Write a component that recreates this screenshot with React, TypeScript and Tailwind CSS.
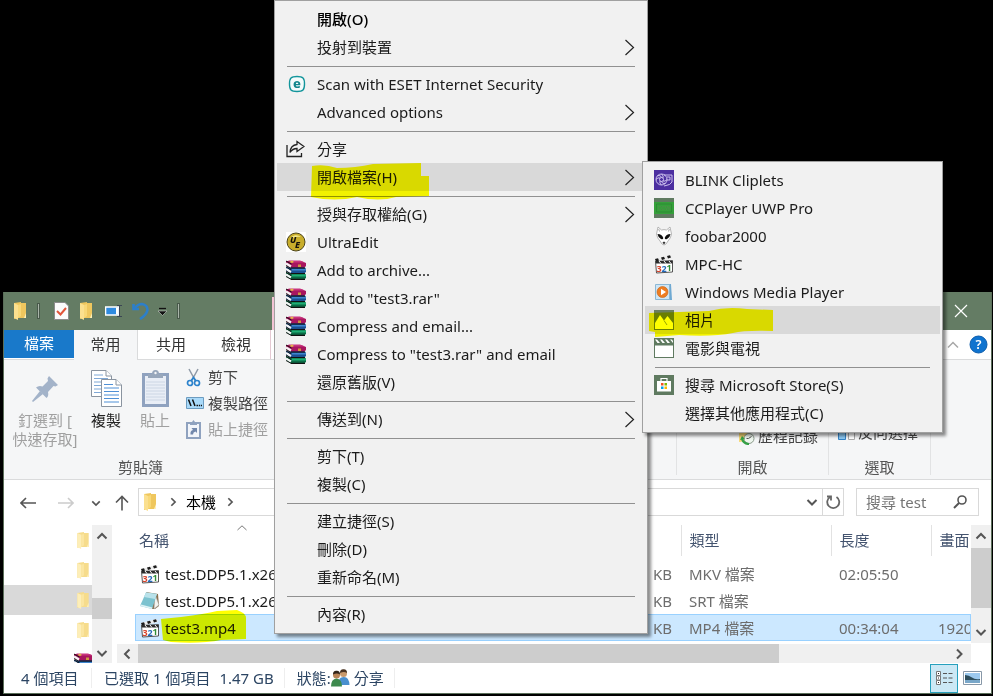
import type { ReactNode } from 'react'
import { clsx } from 'clsx'

type Item = { label: string; icon?: ReactNode; bold?: boolean; sub?: boolean; active?: boolean }

const MENU: Item[][] = [
  [{ label: '開啟(O)', bold: true }, { label: '投射到裝置', sub: true }],
  [{ label: 'Scan with ESET Internet Security', icon: <EsetIcon /> }, { label: 'Advanced options', sub: true }],
  [{ label: '分享', icon: <ShareIcon /> }, { label: '開啟檔案(H)', sub: true, active: true }],
  [
    { label: '授與存取權給(G)', sub: true },
    { label: 'UltraEdit', icon: <UltraEditIcon /> },
    { label: 'Add to archive...', icon: <RarIcon /> },
    { label: 'Add to "test3.rar"', icon: <RarIcon /> },
    { label: 'Compress and email...', icon: <RarIcon /> },
    { label: 'Compress to "test3.rar" and email', icon: <RarIcon /> },
    { label: '還原舊版(V)' },
  ],
  [{ label: '傳送到(N)', sub: true }],
  [{ label: '剪下(T)' }, { label: '複製(C)' }],
  [{ label: '建立捷徑(S)' }, { label: '刪除(D)' }, { label: '重新命名(M)' }],
  [{ label: '內容(R)' }],
]

const OPEN_WITH: Item[][] = [
  [
    { label: 'BLINK Cliplets', icon: <BlinkIcon /> },
    { label: 'CCPlayer UWP Pro', icon: <CCPlayerIcon /> },
    { label: 'foobar2000', icon: <FoobarIcon /> },
    { label: 'MPC-HC', icon: <ClapperIcon /> },
    { label: 'Windows Media Player', icon: <WmpIcon /> },
    { label: '相片', icon: <PhotosIcon />, active: true },
    { label: '電影與電視', icon: <MoviesIcon /> },
  ],
  [{ label: '搜尋 Microsoft Store(S)', icon: <StoreIcon /> }, { label: '選擇其他應用程式(C)' }],
]

const FILES = [
  { name: 'test.DDP5.1.x264', type: 'MKV 檔案', length: '02:05:50', frame: '', icon: <ClapperIcon /> },
  { name: 'test.DDP5.1.x264', type: 'SRT 檔案', length: '', frame: '', icon: <SrtIcon /> },
  { name: 'test3.mp4', type: 'MP4 檔案', length: '00:34:04', frame: '1920', icon: <ClapperIcon />, selected: true },
]

export default function App() {
  return (
    <main className="relative min-h-screen overflow-hidden bg-black pt-[292px] pr-[1px] pb-[3px] pl-[3px] font-['Noto_Sans','Noto_Sans_CJK_TC',sans-serif] text-[15px] leading-5 text-[#1b1b1b]">
      <Explorer />

      {/* Context menu */}
      <div className="absolute top-0 left-[274px] w-[374px]">
        <Menu groups={MENU} />
        <svg className="pointer-events-none absolute top-[161px] left-[37px] h-10 w-[120px] mix-blend-multiply" viewBox="0 0 120 40">
          <path d="M1 5Q14 3 26 7Q44 7 62 3L110 2V15H118V35L85 36Q68 41 46 36Q24 41 0 36Z" fill="#ff0" />
        </svg>
      </div>

      {/* Open-with submenu */}
      <div className="absolute top-[161px] left-[642px] w-[301px]">
        <Menu groups={OPEN_WITH} />
        <svg className="pointer-events-none absolute top-[145px] left-[7px] h-8 w-[126px] mix-blend-multiply" viewBox="0 0 126 32">
          <path d="M0 7L60 5Q78 0 98 3L124 4V25Q96 24 84 27Q64 31 30 29L6 31V26L0 25Z" fill="#ff0" />
        </svg>
      </div>
    </main>
  )
}

function Menu({ groups }: { groups: Item[][] }) {
  return (
    <div role="menu" className="border border-[#a0a0a0] bg-[#f1f1f1] px-0.5 pt-1 pb-[5px] shadow-[3px_3px_3px_rgba(0,0,0,0.45)]">
      {groups.map((group, i) => (
        <div key={i}>
          {i > 0 && (
            <div className="flex h-[9px] items-end pr-2.5 pb-[3px] pl-2.5">
              <div className="h-px flex-1 bg-[#919191]" />
            </div>
          )}
          {group.map((item) => (
            <button
              key={item.label}
              role="menuitem"
              className={clsx('flex h-7 w-full items-center pr-2.5 pl-[9px] text-left', item.active && 'bg-[#d9d9d9]')}
            >
              <span className="flex h-5 w-[31px] shrink-0 items-center">{item.icon}</span>
              <span className={clsx('flex-1 whitespace-nowrap', item.bold && 'font-medium text-black')}>{item.label}</span>
              {item.sub && (
                <svg width="11" height="17" viewBox="0 0 11 17" fill="none" stroke="#222" strokeWidth="1.2">
                  <path d="M1.500 1L9.500 8.500L1.500 16" />
                </svg>
              )}
            </button>
          ))}
        </div>
      ))}
    </div>
  )
}

function Explorer() {
  return (
    <section className="border-x border-b border-[#5b6f5a] bg-white">
      <TitleBar />
      <Tabs />
      <Ribbon />
      <AddressBar />
      <div className="flex">
        <NavPane />
        <FileList />
      </div>
      <StatusBar />
    </section>
  )
}

function TitleBar() {
  return (
    <header className="flex h-[38px] items-center justify-between bg-[#647c64]">
      <div className="flex h-full items-center">
        <span className="ml-2.5"><FolderIcon tall /></span>
        <span className="ml-2.5 h-4 w-[3px] border border-[#48594a] bg-[#a9b5a9]" />
        <button aria-label="內容" className="ml-[14px]">
          <svg width="15" height="18" viewBox="0 0 15 18">
            <path d="M.5.500H11L14.500 4V17.500H.5Z" fill="#fbfbfb" stroke="#8c8c8c" />
            <path d="M3 9L6.500 12.500L12 6" fill="none" stroke="#e2553a" strokeWidth="2" />
          </svg>
        </button>
        <button aria-label="新增資料夾" className="ml-[11px]"><FolderIcon tall /></button>
        <button aria-label="重新命名" className="ml-3">
          <svg width="18" height="12" viewBox="0 0 18 12">
            <path d="M.5 2H14V10H.5Z" fill="#2f8be0" stroke="#fff" strokeWidth="1.600" />
            <path d="M11 2.500H13.500V9.500H11Z" fill="#fff" />
            <path d="M12 .5H17M12 11.500H17M14.500 .5V11.500" stroke="#3b4654" />
          </svg>
        </button>
        <button aria-label="復原" className="ml-[9px]">
          <svg width="17" height="18" viewBox="0 0 17 18" fill="none" stroke="#2d7fca" strokeWidth="2.600">
            <path d="M1.500 2V7H7" />
            <path d="M2.500 6.500Q6 2 10 2Q15.500 3 15.500 8Q14.500 13 8 17" />
          </svg>
        </button>
        <button aria-label="自訂" className="ml-[9px]">
          <svg width="9" height="9" viewBox="0 0 9 9">
            <path d="M1 1.500H8" stroke="#111" strokeWidth="1.300" />
            <path d="M0 4H9L4.500 8.500Z" fill="#111" stroke="#dfe6df" strokeWidth=".5" />
          </svg>
        </button>
        <span className="ml-2.5 h-4 w-[3px] border border-[#48594a] bg-[#a9b5a9]" />
        <span className="mt-[5px] ml-[92px] h-[33px] w-[90px] bg-[#f2c4d4]" />
      </div>
      <button aria-label="關閉" className="mr-[23px]">
        <svg width="14" height="14" viewBox="0 0 14 14" stroke="#fff" strokeWidth="1.200">
          <path d="M1 1L13 13M13 1L1 13" />
        </svg>
      </button>
    </header>
  )
}

function Tabs() {
  return (
    <nav className="flex h-[30px] items-stretch border-b border-[#dadbdc] text-[#333]">
      <button className="mb-px w-[70px] bg-[#1979ca] pb-0.5 text-white">檔案</button>
      <button className="-mb-px w-16 border-r border-[#dadbdc] bg-[#f5f6f7] pb-0.5">常用</button>
      <button className="w-[66px] pb-0.5">共用</button>
      <button className="w-[64px] pb-0.5">檢視</button>
      <span className="w-[3px] border-r border-[#e4c9d2]" />
      <span className="flex-1" />
      <button aria-label="摺疊功能區" className="mr-[10px]">
        <svg width="12" height="8" viewBox="0 0 12 8" fill="none" stroke="#a8a8a8" strokeWidth="1.500">
          <path d="M1 6.500L6 1.500L11 6.500" />
        </svg>
      </button>
      <button aria-label="說明" className="mr-[3px]">
        <svg width="19" height="19" viewBox="0 0 19 19">
          <circle cx="9.500" cy="9.500" r="8.500" fill="#0f73cf" stroke="#0b5cab" />
          <text x="9.500" y="14" textAnchor="middle" fontSize="13" fontWeight="600" fill="#fff">?</text>
        </svg>
      </button>
    </nav>
  )
}

function Ribbon() {
  return (
    <div className="flex h-[120px] border-b border-[#dadbdc] bg-[#f5f6f7] text-[#444]">
      <div className="flex w-[273px] shrink-0 flex-col justify-between">
        <div className="flex pt-[7px]">
          <button className="flex w-[82px] flex-col items-center text-[#a0a0a0]">
            <span className="flex h-[44px] items-center"><PinIcon /></span>
            <span className="leading-[19px]">釘選到 [<br />快速存取]</span>
          </button>
          <button className="flex w-[40px] flex-col items-center text-[#222]">
            <span className="flex h-[44px] items-start pt-[3px]"><CopyIcon /></span>
            <span className="leading-[19px] whitespace-nowrap">複製</span>
          </button>
          <button className="flex w-[58px] flex-col items-center text-[#a0a0a0]">
            <span className="flex h-[44px] items-start pt-[3px]"><PasteIcon /></span>
            <span className="leading-[19px]">貼上</span>
          </button>
          <div className="ml-0.5 flex flex-col gap-1.5">
            <SmallButton icon={<CutIcon />} label="剪下" />
            <SmallButton icon={<PathIcon />} label="複製路徑" />
            <SmallButton icon={<PasteLinkIcon />} label="貼上捷徑" muted />
          </div>
        </div>
        <p className="pb-0.5 text-center text-[#555]">剪貼簿</p>
      </div>
      <div className="my-1 flex-1 border-r border-[#e2e3e4]" />
      <div className="my-1 flex w-[152px] flex-col items-center justify-end border-r border-[#e2e3e4]">
        <div className="mb-[11px] ml-[61px] self-start"><SmallButton icon={<HistoryIcon />} label="歷程記錄" narrow /></div>
        <p className="-mb-0.5 text-[#555]">開啟</p>
      </div>
      <div className="my-1 flex w-[102px] flex-col items-start justify-end border-r border-[#e2e3e4]">
        <div className="mb-[15px] ml-[9px]"><SmallButton icon={<InvertIcon />} label="反向選擇" narrow /></div>
        <p className="-mb-0.5 self-center text-[#555]">選取</p>
      </div>
      <div className="w-[60px]" />
    </div>
  )
}

function SmallButton({ icon, label, muted, narrow }: { icon: ReactNode; label: string; muted?: boolean; narrow?: boolean }) {
  return (
    <button className={clsx('flex items-center whitespace-nowrap', muted && 'text-[#a0a0a0]')}>
      <span className={clsx('flex items-center', narrow ? 'w-5' : 'w-[22px]')}>{icon}</span>
      {label}
    </button>
  )
}

function AddressBar() {
  return (
    <div className="flex h-[45px] items-center pr-3 pb-[2px] pl-4">
      <div className="flex w-[118px] shrink-0 items-center pt-0.5">
        <button aria-label="上一頁"><Arrow color="#555" /></button>
        <button aria-label="下一頁" className="ml-[22px]"><Arrow color="#ccc" right /></button>
        <button aria-label="最近" className="ml-[17px]"><Chevron dir="down" small /></button>
        <button aria-label="上一層" className="ml-[13px]">
          <svg width="16" height="16" viewBox="0 0 16 16" fill="none" stroke="#555" strokeWidth="1.600">
            <path d="M8 15.500V1.500M2 7.500L8 1.500L14 7.500" />
          </svg>
        </button>
      </div>
      <div className="flex h-7 flex-1 items-center border border-[#d9d9d9] pl-[5px]">
        <FolderIcon tall />
        <span className="ml-[11px]"><Chevron dir="right" small /></span>
        <button className="ml-2 text-black">本機</button>
        <span className="ml-[9px]"><Chevron dir="right" small /></span>
        <span className="flex-1" />
        <button aria-label="舊的位置" className="mr-[4px]"><Chevron dir="down" /></button>
        <button aria-label="重新整理" className="flex h-full w-[21px] items-center justify-center border-l border-[#d9d9d9]">
          <svg width="15" height="16" viewBox="0 0 15 16" fill="none" stroke="#666" strokeWidth="1.800">
            <path d="M4 3A6 6 0 1 0 10.500 3" />
            <path d="M1 2.500H5V6.500" />
          </svg>
        </button>
      </div>
      <label className="ml-3 flex h-7 w-[123px] shrink-0 items-center border border-[#d9d9d9] pr-[11px] pl-[9px]">
        <input aria-label="搜尋 test" placeholder="搜尋 test" className="w-0 flex-1 outline-none placeholder:text-[#757575]" />
        <svg width="14" height="14" viewBox="0 0 14 14" fill="none" stroke="#555">
          <circle cx="9" cy="5" r="4" strokeWidth="1.600" />
          <path d="M6 8L1 13" strokeWidth="2" />
        </svg>
      </label>
    </div>
  )
}

function NavPane() {
  return (
    <div className="flex h-[138px] w-[108px] shrink-0">
      <div className="h-full w-[88px] overflow-hidden">
        {[false, false, true, false].map((selected, i) => (
          <div key={i} className={clsx('flex h-[30px] items-center justify-end pr-[2px]', selected && 'bg-[#d9d9d9]')}>
            <FolderIcon pale />
          </div>
        ))}
        <div className="flex pt-2 pl-[70px]"><RarIcon /></div>
      </div>
      <div className="flex w-5 flex-col items-center bg-[#f0f0f0] pt-[5px] pb-1">
        <Chevron dir="up" />
        <span className="mt-14 h-[21px] w-full bg-[#cdcdcd]" />
        <span className="mt-auto"><Chevron dir="down" /></span>
      </div>
    </div>
  )
}

function FileList() {
  return (
    <div className="flex min-w-0 flex-1 flex-col pl-[5px]">
      <div className="flex flex-1">
        <div className="relative min-w-0 flex-1 overflow-hidden pl-[18px]">
          <table className="w-full table-fixed border-collapse text-left">
            <colgroup>
              <col className="w-[216px]" />
              <col />
              <col className="w-[110px]" />
              <col className="w-[150px]" />
              <col className="w-[100px]" />
              <col className="w-[40px]" />
            </colgroup>
            <thead className="text-[#44546f]">
              <tr className="h-[31px]">
                <th className="relative pb-0.5 pl-1 font-normal">
                  名稱
                  <svg className="absolute top-0 left-[102px]" width="10" height="6" viewBox="0 0 10 6" fill="none" stroke="#777">
                    <path d="M.5 5L5 .8L9.500 5" />
                  </svg>
                </th>
                <th />
                <th className="border-r border-[#e2e2e2]" />
                <th className="border-r border-[#e2e2e2] pb-0.5 pl-2 font-normal">類型</th>
                <th className="border-r border-[#e2e2e2] pb-0.5 pl-2 font-normal">長度</th>
                <th className="pb-0.5 pl-2 font-normal whitespace-nowrap">畫面</th>
              </tr>
              <tr className="h-1"><td colSpan={6} /></tr>
            </thead>
            <tbody className="whitespace-nowrap text-[#6d6d6d]">
              {FILES.map((f) => (
                <tr key={f.type} className={clsx('h-[27px]', f.selected && 'bg-[#cce8ff] outline outline-[#99d1ff] -outline-offset-1')}>
                  <td className="text-[#1b1b1b]">
                    <span className="flex items-center pl-[5px]">
                      <span className="w-[25px]">{f.icon}</span>
                      {f.name}
                    </span>
                  </td>
                  <td />
                  <td className="pr-[9px] text-right">KB</td>
                  <td className="pl-2">{f.type}</td>
                  <td className="pl-2">{f.length}</td>
                  <td className="pl-[7px]">{f.frame}</td>
                </tr>
              ))}
            </tbody>
          </table>
          <svg className="pointer-events-none absolute top-[85px] left-11 h-[34px] w-[86px] mix-blend-multiply" viewBox="0 0 86 34">
            <path d="M0 9L20 7Q44 4 56 1L76 0Q85 3 85 8V29L60 30Q40 34 10 32L2 30Z" fill="#ff0" />
          </svg>
        </div>
        <div className="flex w-5 flex-col items-center bg-[#f0f0f0] pt-[5px] pb-[5px]">
          <Chevron dir="up" />
          <span className="mt-1.5 h-[60px] w-full bg-[#cdcdcd]" />
          <span className="mt-auto"><Chevron dir="down" /></span>
        </div>
      </div>
      <div className="mt-px mr-5 flex h-[19px] items-center bg-[#f0f0f0] pr-1.5 pl-1">
        <Chevron dir="left" />
        <span className="ml-[5px] h-full w-[76%] bg-[#cdcdcd]" />
        <span className="ml-auto"><Chevron dir="right" /></span>
      </div>
    </div>
  )
}

function StatusBar() {
  return (
    <footer className="flex h-[30px] items-center text-[#2c4563]">
      <span className="w-[88px] border-r border-[#eee] pl-[17px] whitespace-nowrap">4 個項目</span>
      <span className="pl-3 whitespace-nowrap">已選取 1 個項目</span>
      <span className="pl-[9px] whitespace-nowrap">1.47 GB</span>
      <span className="ml-2.5 h-5 border-l border-[#eee] pl-3 whitespace-nowrap">狀態:</span>
      <UsersIcon />
      <span className="ml-1 h-5 border-r border-[#eee] pr-2.5">分享</span>
      <span className="flex-1" />
      <button aria-label="詳細資料" className="flex h-[29px] w-7 items-center justify-center border border-[#26a0bd] bg-[#cbe8f5]">
        <svg width="18" height="16" viewBox="0 0 18 16">
          <path d="M1.500 1.500H5.500V5.500H1.500ZM1.500 6H5.500V10H1.500ZM1.500 10.500H5.500V14.500H1.500Z" fill="#fff" stroke="#777" />
          <path d="M3 3.500H4M3 8H4M3 12.500H4" stroke="#222" />
          <path d="M8 3.500H18M8 8H18M8 12.500H18" stroke="#555" strokeDasharray="4 1.500" />
        </svg>
      </button>
      <button aria-label="大圖示" className="mr-[9px] ml-[5px]">
        <svg width="19" height="14" viewBox="0 0 19 14">
          <path d="M.5.500H18.500V13.500H.5Z" fill="#fff" stroke="#8898a8" />
          <path d="M2 2H17V12H2Z" fill="#9cc9ee" />
          <path d="M2 4Q6 4 9 6.500T17 8V9H2Z" fill="#2d4d5c" />
          <path d="M2 9H17V12H2Z" fill="#79a7c9" />
        </svg>
      </button>
    </footer>
  )
}

/* ---- glyphs ---- */

function Chevron({ dir, small }: { dir: 'up' | 'down' | 'left' | 'right'; small?: boolean }) {
  const d = {
    up: 'M1.500 8.500L6 4L10.500 8.500',
    down: 'M1.500 4L6 8.500L10.500 4',
    left: 'M8.500 1.500L4 6L8.500 10.500',
    right: 'M4 1.500L8.500 6L4 10.500',
  }[dir]
  const size = small ? 10 : 12
  return (
    <svg width={size} height={size} viewBox="0 0 12 12" fill="none" stroke="#555" strokeWidth="2">
      <path d={d} />
    </svg>
  )
}

function Arrow({ color, right }: { color: string; right?: boolean }) {
  return (
    <svg width="16" height="12" viewBox="0 0 16 12" fill="none" stroke={color} strokeWidth="1.600">
      <path d={right ? 'M0 6H15M10 1L15 6L10 11' : 'M16 6H1M6 1L1 6L6 11'} />
    </svg>
  )
}

function FolderIcon({ pale, tall }: { pale?: boolean; tall?: boolean }) {
  return (
    <svg width="13" height={tall ? 18 : 17} viewBox="0 0 13 18">
      <path d="M0 1L7 0V1H12V16H3L0 17Z" fill={pale ? '#f6dc8c' : '#efc75e'} />
      <path d="M0 1L4 3V18L0 16Z" fill={pale ? '#fdeeb8' : '#fbe08f'} />
      <path d="M4 3L7 2V14L4 16Z" fill={pale ? '#fbe6a2' : '#f8d878'} />
      <path d="M12 11V16L10 16Z" fill="#fff0b8" />
    </svg>
  )
}

function EsetIcon() {
  return (
    <svg width="18" height="18" viewBox="0 0 18 18" className="ml-0.5">
      <path d="M9 1.500C15 1.500 16.500 3 16.500 9S15 16.500 9 16.500S1.500 15 1.500 9S3 1.500 9 1.500Z" fill="#f4fbfb" stroke="#12959b" strokeWidth="1.400" />
      <text x="9" y="13" textAnchor="middle" fontSize="13" fontWeight="800" fill="#12868c">e</text>
    </svg>
  )
}

function ShareIcon() {
  return (
    <svg width="19" height="18" viewBox="0 0 19 18" fill="none" stroke="#222" strokeWidth="1.300">
      <path d="M1 5V16.500H15.500V13" />
      <path d="M11 1.500L18 6.500L11 11.500V8.500Q6.500 8.500 4 12.500Q4.500 5 11 4.500Z" />
    </svg>
  )
}

function UltraEditIcon() {
  return (
    <svg width="20" height="20" viewBox="0 0 20 20">
      <path d="M0 0H20V20H0Z" fill="#fff" />
      <circle cx="10" cy="10" r="9" fill="#c8ad2b" stroke="#4b431a" />
      <path d="M4 7A7 7 0 0 1 15 5Q10 4 4 7Z" fill="#f3e88c" />
      <text x="4" y="11" fontSize="9" fontWeight="800" fontStyle="italic" fill="#15120a">U</text>
      <text x="9" y="16" fontSize="9" fontWeight="800" fontStyle="italic" fill="#15120a">E</text>
    </svg>
  )
}

function RarIcon() {
  return (
    <svg width="21" height="20" viewBox="0 0 21 20" className="shrink-0">
      {/* three stacked books */}
      <path d="M0 1H15L20 3V6L18 8H5L0 5Z" fill="#a8165f" />
      <path d="M2 .5H14L19 2.500H6Z" fill="#c9347f" />
      <path d="M5 7.500H19L20 9V12L18 13.500H5L0 11V7Z" fill="#1a5092" />
      <path d="M6 9H20V10.500H6Z" fill="#3f86cf" />
      <path d="M5 13.500H19L20 15V18L18 19.500H5L0 16V12Z" fill="#0b6a45" />
      <path d="M6 14.500H20V16.500H6Z" fill="#1fae74" />
      <path d="M0 3.500L5 6.500M0 9L5 12M0 14.500L5 17.500" stroke="#f4f4f4" strokeWidth="2.200" />
      <path d="M0 1L5.500 4M0 5.500L5 8.500M0 6.800L5 10M0 11L5 14M0 12.300L5 15.500M0 16.500L5 19.300" stroke="#111" strokeWidth=".9" />
      <path d="M5 8H19M5 13.500H19M5 19.300H19" stroke="#111" strokeWidth="1.200" />
      <path d="M6 .5L8 2L6 3L3.500 2Z" fill="#e6b848" />
      <path d="M12 4.500H15V7H12Z" fill="#cf9840" />
    </svg>
  )
}

function BlinkIcon() {
  return (
    <svg width="20" height="20" viewBox="0 0 20 20">
      <path d="M0 0H20V20H0Z" fill="#4c2fa0" />
      <g fill="none" stroke="#d9cff5" strokeWidth=".9">
        <circle cx="7.500" cy="9.500" r="5.500" />
        <circle cx="7.500" cy="9.500" r="2" />
        <path d="M7.500 4Q10 6 9 8M13 9.500Q11 12 9 11M7.500 15Q5 13 6 11M2 9.500Q4 7 6 8M3.500 5.500Q7 5 7.500 7.500M11.500 13.500Q8 14 7.500 11.500" />
        <path d="M10 5H18V12Q17 15 10 16M13 7H16V10H13" />
      </g>
    </svg>
  )
}

function CCPlayerIcon() {
  return (
    <svg width="20" height="20" viewBox="0 0 20 20">
      <path d="M0 0H20V20H0Z" fill="#5f7a60" />
      <path d="M0 4H20V16H0Z" fill="#35a03a" />
      <path d="M2.500 6H17.500V14H2.500Z" fill="none" stroke="#2a8430" strokeWidth=".7" />
      <text x="10" y="12" textAnchor="middle" fontSize="6" fill="#56874f">CCW</text>
    </svg>
  )
}

function FoobarIcon() {
  return (
    <svg width="20" height="20" viewBox="0 0 20 20">
      <path d="M4 1L7.500 4Q10 3.200 12.500 4L16 1L17.500 8Q17 12 14 15L12 18Q10 20 8 18L6 15Q3 12 2.500 8Z" fill="#fff" stroke="#a4a4a4" strokeWidth=".8" />
      <path d="M3.500 8Q8 8 9.300 12Q9 14 7 13Q4 11.500 3.500 8ZM16.500 8Q12 8 10.700 12Q11 14 13 13Q16 11.500 16.500 8Z" fill="#111" />
      <path d="M8.500 16.500L10 15.500L11.500 16.500L10 18.500Z" fill="#333" />
      <path d="M4.700 3L5.500 5.500M15.300 3L14.500 5.500" stroke="#aaa" />
    </svg>
  )
}

function ClapperIcon() {
  return (
    <svg width="20" height="20" viewBox="0 0 20 20">
      <path d="M1 5L17 1L18 4L2 8Z" fill="#ececec" />
      <path d="M1 5L4 4.300L5 6.500L2 8ZM7 3.500L10 2.800L11 5L8 6ZM13 2L16 1.300L17 3.500L14 4.600Z" fill="#1b1b1b" />
      <path d="M1.500 7.500L18.500 6.500V18L2.500 19Z" fill="#fff" stroke="#444" strokeWidth=".9" />
      <path d="M1.500 7H18.500V9.500H2Z" fill="#2b2b2b" />
      <path d="M5 7L7 9.500M10 7L12 9.500M15 7L17 9.500" stroke="#fff" />
      <g fontSize="9" fontWeight="700">
        <text x="2.500" y="17.800" fill="#d8432c">3</text>
        <text x="7.500" y="17.500" fill="#2569b8">2</text>
        <text x="12.500" y="17.200" fill="#2e8a34">1</text>
      </g>
    </svg>
  )
}

function WmpIcon() {
  return (
    <svg width="20" height="20" viewBox="0 0 20 20">
      <path d="M5 2H17L18 18H5Z" fill="#6fa9d2" />
      <path d="M1.500 2.500H15.500V17.500H1.500Z" fill="#cfe6f5" stroke="#8bb8d6" />
      <circle cx="8.500" cy="10" r="5.500" fill="#ee7d22" stroke="#c75f11" strokeWidth=".6" />
      <path d="M7 6.800L12 10L7 13.200Z" fill="#fff" />
    </svg>
  )
}

function PhotosIcon() {
  return (
    <svg width="20" height="20" viewBox="0 0 20 20">
      <path d="M0 0H20V20H0Z" fill="#6a7f5f" />
      <path d="M1 19V13L6 5L10 10.500L13.500 6L19 13V19Z" fill="#fff" />
      <path d="M10 10.500L13 15" stroke="#6a7f5f" strokeWidth=".7" />
    </svg>
  )
}

function MoviesIcon() {
  return (
    <svg width="20" height="20" viewBox="0 0 20 20">
      <path d="M0 0H20V20H0Z" fill="#5f7a60" />
      <path d="M1 7.500H19V19H1Z" fill="#fff" />
      <path d="M1 1.500H3L6 5H3.500ZM6 1.500H8L11 5H8.500ZM11 1.500H13L16 5H13.500ZM16 1.500H18L19 3V5Z" fill="#fff" />
    </svg>
  )
}

function StoreIcon() {
  return (
    <svg width="20" height="20" viewBox="0 0 20 20">
      <path d="M0 0H20V20H0Z" fill="#5f7a60" />
      <path d="M3 6H17V16.500H3Z" fill="#fff" />
      <path d="M7 6V3.500H13V6" fill="none" stroke="#fff" strokeWidth="1.200" />
      <path d="M7 8H9.500V10.500H7Z" fill="#f25022" />
      <path d="M10.500 8H13V10.500H10.500Z" fill="#7fba00" />
      <path d="M7 11.500H9.500V14H7Z" fill="#00a4ef" />
      <path d="M10.500 11.500H13V14H10.500Z" fill="#ffb900" />
    </svg>
  )
}

function SrtIcon() {
  return (
    <svg width="20" height="20" viewBox="0 0 20 20">
      <path d="M6 1L18 3L19 15L15 18L12 18Z" fill="#8a6f4d" />
      <path d="M15 3L19 14L14 18Z" fill="#f4f4f0" stroke="#999" strokeWidth=".5" />
      <path d="M6 1.500L17 3L12 18L0 15Z" fill="#7cc2cf" />
      <path d="M6 1.500L17 3L15 8L4 6Z" fill="#b9e2ea" />
      <path d="M0 15L12 18L12.500 16.500L1 13.500Z" fill="#dff2f5" />
    </svg>
  )
}

function PinIcon() {
  return (
    <svg width="28" height="28" viewBox="0 0 28 28" fill="#a3b3c9">
      <path d="M18 1L27 10L24.500 11.500L22.500 11L17 17Q18 21 15.500 23L5 12.500Q8 10 11.500 11.500L17 6L16.500 3.500Z" />
      <path d="M9 16L12 19L2 27L1 26Z" />
    </svg>
  )
}

function CopyIcon() {
  return (
    <svg width="31" height="37" viewBox="0 0 31 37">
      <g fill="#fff" stroke="#8a94a0">
        <path d="M.5.500H15L20.500 6V26.500H.5Z" />
        <path d="M15 .5V6H20.500" />
        <path d="M3 5H12M3 8.500H17M3 12H17M3 15.500H10M3 19H10M3 22.500H10" stroke="#7fa8d6" />
        <path d="M10.500 9.500H25L30.500 15V36.500H10.500Z" />
        <path d="M25 9.500V15H30.500" />
        <path d="M13 14.500H22M13 18H28M13 21.500H28M13 25H28M13 28.500H28M13 32H28" stroke="#4f90d6" />
      </g>
    </svg>
  )
}

function PasteIcon() {
  return (
    <svg width="27" height="37" viewBox="0 0 27 37">
      <path d="M1.500 4.500H25.500V35.500H1.500Z" fill="#e9eef6" stroke="#8fa2bf" strokeWidth="3" />
      <path d="M4 12H23M4 15H23M4 18H23M4 21H23M4 24H23M4 27H23M4 30H23" stroke="#ccd6e4" />
      <path d="M6 4H10Q10 0 13.500 0Q17 0 17 4H21V8H6Z" fill="#98a7bb" />
      <circle cx="13.500" cy="3" r="1.200" fill="#f5f6f7" />
    </svg>
  )
}

function CutIcon() {
  return (
    <svg width="15" height="19" viewBox="0 0 15 19" fill="none">
      <path d="M3 1L9.500 13M12 1L5.500 13" stroke="#8e99a6" strokeWidth="1.500" />
      <circle cx="4" cy="15" r="2.500" stroke="#2b82cc" strokeWidth="1.700" />
      <circle cx="11" cy="15" r="2.500" stroke="#2b82cc" strokeWidth="1.700" />
      <path d="M5 13L7.500 9.500L10 13" stroke="#2b82cc" strokeWidth="1.700" />
    </svg>
  )
}

function PathIcon() {
  return (
    <svg width="18" height="12" viewBox="0 0 18 12">
      <path d="M.5.500H17.500V11.500H.5Z" fill="#a9dafa" stroke="#6d9cc0" />
      <path d="M2.500 2.500L5 9M6.500 2.500L9 9" stroke="#111" strokeWidth="1.500" />
      <path d="M10.500 8.500H12M12.800 8.500H14M14.800 8.500H16" stroke="#111" strokeWidth="1.300" />
    </svg>
  )
}

function PasteLinkIcon() {
  return (
    <svg width="15" height="19" viewBox="0 0 15 19">
      <path d="M1 3H14V18H1Z" fill="#f2f5fa" stroke="#8fa2bf" strokeWidth="2" />
      <path d="M4 2H6L7.500 0L9 2H11V5H4Z" fill="#8fa2bf" />
      <path d="M4.500 14.500Q4 10.500 7 10L5.500 8H11V13L9.500 11.500Q7 12 7 14.500Z" fill="#7288ac" />
    </svg>
  )
}

function HistoryIcon() {
  return (
    <svg width="17" height="17" viewBox="0 0 17 17">
      <path d="M1 0H10V13L1 14Z" fill="#f6d877" />
      <circle cx="11" cy="10.500" r="5" fill="#eef6ee" stroke="#8a9a8a" />
      <path d="M10.500 10.500L13.500 8.500M10.500 10.500H8.500" stroke="#555" />
      <path d="M4 11Q6 16 11 16" fill="none" stroke="#35a046" strokeWidth="2.200" />
      <path d="M2 12L4 8L7 11Z" fill="#35a046" />
    </svg>
  )
}

function InvertIcon() {
  return (
    <svg width="17" height="15" viewBox="0 0 17 15">
      <path d="M.5.500H7.500V14.500H.5Z" fill="#8cc8f2" stroke="#3583c5" />
      <path d="M10.500 5.500H16.500V14.500H10.500Z" fill="#fff" stroke="#aaa" />
    </svg>
  )
}

function UsersIcon() {
  return (
    <svg width="19" height="18" viewBox="0 0 19 18">
      <circle cx="12.500" cy="4.500" r="3.500" fill="#c99a6d" />
      <path d="M9 4Q9 0 12.500 .3Q16 0 16 4Q13 2 9 4Z" fill="#4a3423" />
      <path d="M8 16V11Q9 8 13 8Q18 8 18.500 16Z" fill="#4a90cf" />
      <circle cx="5.500" cy="6" r="3.500" fill="#b98458" />
      <path d="M2 5.500Q2 1.500 5.500 1.800Q9 1.500 9 5.500Q6 3.500 2 5.500Z" fill="#33261b" />
      <path d="M0 17.500Q0 10 5.500 9.500Q11 10 11 17.500Z" fill="#3e8a4e" />
    </svg>
  )
}
